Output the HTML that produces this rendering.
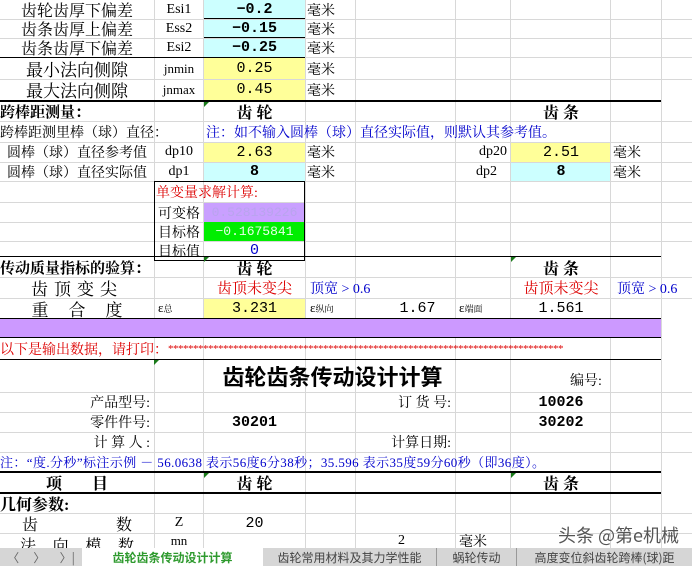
<!DOCTYPE html>
<html><head><meta charset="utf-8"><style>
*{margin:0;padding:0;box-sizing:border-box}
body{width:692px;height:566px;overflow:hidden;background:#fff;position:relative;font-family:"Liberation Serif","Noto Serif CJK SC",serif;font-size:14px;color:#000}
.v{position:absolute;top:0;width:1px;height:548px;background:#d8d8d8}
.h{position:absolute;left:0;width:692px;height:1px;background:#d8d8d8}
.k{position:absolute;background:#000}
.c{position:absolute;display:flex;align-items:center;justify-content:center;white-space:nowrap;overflow:hidden}
.l{justify-content:flex-start}
.r{justify-content:flex-end}
.b{font-weight:bold}
.m{font-family:"Liberation Mono","Noto Sans CJK SC",monospace;font-size:15px}
.cy{background:#ccffff}
.ye{background:#ffff99}
.blue{color:#0000cc}
.red{color:#dd0000}
.s{font-size:13px}
.tri{position:absolute;width:0;height:0;border-top:5px solid #1a7a1a;border-right:5px solid transparent}
</style></head><body>
<div class="c cy" style="left:204px;top:0;width:101px;height:57px"></div>
<div class="c ye" style="left:204px;top:57px;width:101px;height:43px"></div>
<div class="c ye" style="left:204px;top:142px;width:101px;height:20px"></div>
<div class="c cy" style="left:204px;top:162px;width:101px;height:19px"></div>
<div class="c ye" style="left:511px;top:142px;width:100px;height:20px"></div>
<div class="c cy" style="left:511px;top:162px;width:100px;height:19px"></div>
<div class="c ye" style="left:204px;top:298px;width:101px;height:20px"></div>
<div class="v" style="left:154px"></div><div class="v" style="left:203px"></div><div class="v" style="left:305px"></div><div class="v" style="left:355px"></div><div class="v" style="left:455px"></div><div class="v" style="left:510px"></div><div class="v" style="left:610px"></div><div class="v" style="left:661px"></div>
<div class="h" style="top:19px"></div><div class="h" style="top:38px"></div><div class="h" style="top:57px"></div><div class="h" style="top:79px"></div><div class="h" style="top:121px"></div><div class="h" style="top:142px"></div><div class="h" style="top:162px"></div><div class="h" style="top:181px"></div><div class="h" style="top:202px"></div><div class="h" style="top:222px"></div><div class="h" style="top:241px"></div><div class="h" style="top:277px"></div><div class="h" style="top:298px"></div><div class="h" style="top:392px"></div><div class="h" style="top:412px"></div><div class="h" style="top:432px"></div><div class="h" style="top:452px"></div><div class="h" style="top:513px"></div><div class="h" style="top:533px"></div>
<div class="k" style="left:204px;top:18px;width:101px;height:1px"></div>
<div class="k" style="left:204px;top:37px;width:101px;height:1px"></div>
<div class="k" style="left:0;top:57px;width:305px;height:1px"></div>
<div class="k" style="left:0;top:100px;width:661px;height:2px"></div>
<div style="position:absolute;left:204px;top:203px;width:101px;height:19px;background:#c9a0ff"></div>
<div style="position:absolute;left:204px;top:222px;width:101px;height:19px;background:#00ee00"></div>
<div class="k" style="left:154px;top:181px;width:151px;height:80px;background:transparent;border:1px solid #000"></div>
<div class="k" style="left:0;top:256px;width:661px;height:1px"></div>
<div class="k" style="left:0;top:318px;width:661px;height:1px"></div>
<div class="k" style="left:0;top:337px;width:661px;height:1px"></div>
<div class="k" style="left:0;top:359px;width:661px;height:1px"></div>
<div class="k" style="left:0;top:471px;width:661px;height:2px"></div>
<div class="k" style="left:0;top:492px;width:661px;height:2px"></div>
<div style="position:absolute;left:0;top:319px;width:661px;height:18px;background:#cc99ff"></div>
<div class="tri" style="left:204px;top:102px"></div><div class="tri" style="left:204px;top:257px"></div><div class="tri" style="left:511px;top:257px"></div><div class="tri" style="left:154px;top:360px"></div><div class="tri" style="left:204px;top:473px"></div><div class="tri" style="left:511px;top:473px"></div>
<div class="c" style="left:0;top:0;width:154px;height:19px;font-size:16px">齿轮齿厚下偏差</div>
<div class="c" style="left:154px;top:0;width:50px;height:19px">Esi1</div>
<div class="c b m" style="left:204px;top:0;width:101px;height:19px">−0.2</div>
<div class="c l" style="left:307px;top:0;width:48px;height:19px">毫米</div>
<div class="c" style="left:0;top:19px;width:154px;height:19px;font-size:16px">齿条齿厚上偏差</div>
<div class="c" style="left:154px;top:19px;width:50px;height:19px">Ess2</div>
<div class="c b m" style="left:204px;top:19px;width:101px;height:19px">−0.15</div>
<div class="c l" style="left:307px;top:19px;width:48px;height:19px">毫米</div>
<div class="c" style="left:0;top:38px;width:154px;height:19px;font-size:16px">齿条齿厚下偏差</div>
<div class="c" style="left:154px;top:38px;width:50px;height:19px">Esi2</div>
<div class="c b m" style="left:204px;top:38px;width:101px;height:19px">−0.25</div>
<div class="c l" style="left:307px;top:38px;width:48px;height:19px">毫米</div>
<div class="c" style="left:0;top:58px;width:154px;height:21px;font-size:17px">最小法向侧隙</div>
<div class="c s" style="left:154px;top:58px;width:50px;height:21px">jnmin</div>
<div class="c m" style="left:204px;top:58px;width:101px;height:21px">0.25</div>
<div class="c l" style="left:307px;top:58px;width:48px;height:21px">毫米</div>
<div class="c" style="left:0;top:79px;width:154px;height:21px;font-size:17px">最大法向侧隙</div>
<div class="c s" style="left:154px;top:79px;width:50px;height:21px">jnmax</div>
<div class="c m" style="left:204px;top:79px;width:101px;height:21px">0.45</div>
<div class="c l" style="left:307px;top:79px;width:48px;height:21px">毫米</div>
<div class="c l b" style="left:0;top:102px;width:154px;height:19px;font-size:15px">跨棒距测量：</div>
<div class="c b" style="left:204px;top:102px;width:101px;height:19px;font-size:16px">齿&nbsp;轮</div>
<div class="c b" style="left:511px;top:102px;width:100px;height:19px;font-size:16px">齿&nbsp;条</div>
<div class="c l" style="left:0;top:121px;width:203px;height:21px">跨棒距测里棒（球）直径：</div>
<div class="c l blue" style="left:206px;top:121px;width:400px;height:21px">注：如不输入圆棒（球）直径实际值，则默认其参考值。</div>
<div class="c" style="left:0;top:142px;width:154px;height:20px">圆棒（球）直径参考值</div>
<div class="c" style="left:154px;top:142px;width:50px;height:20px">dp10</div>
<div class="c m" style="left:204px;top:142px;width:101px;height:20px">2.63</div>
<div class="c l" style="left:307px;top:142px;width:48px;height:20px">毫米</div>
<div class="c r" style="left:455px;top:142px;width:52px;height:20px">dp20</div>
<div class="c m" style="left:511px;top:142px;width:100px;height:20px">2.51</div>
<div class="c l" style="left:613px;top:142px;width:48px;height:20px">毫米</div>
<div class="c" style="left:0;top:162px;width:154px;height:19px">圆棒（球）直径实际值</div>
<div class="c" style="left:154px;top:162px;width:50px;height:19px">dp1</div>
<div class="c b m" style="left:204px;top:162px;width:101px;height:19px">8</div>
<div class="c l" style="left:307px;top:162px;width:48px;height:19px">毫米</div>
<div class="c r" style="left:455px;top:162px;width:42px;height:19px">dp2</div>
<div class="c b m" style="left:511px;top:162px;width:100px;height:19px">8</div>
<div class="c l" style="left:613px;top:162px;width:48px;height:19px">毫米</div>
<div class="c l red" style="left:156px;top:182px;width:148px;height:20px">单变量求解计算:</div>
<div class="c" style="left:154px;top:203px;width:50px;height:19px">可变格</div>
<div class="c m" style="left:204px;top:203px;width:101px;height:19px;color:#b9a4ee;font-size:13px">0.528139226</div>
<div class="c" style="left:154px;top:222px;width:50px;height:19px">目标格</div>
<div class="c m" style="left:204px;top:222px;width:101px;height:19px;color:#e8ffe8;font-size:13px">−0.1675841</div>
<div class="c" style="left:154px;top:241px;width:50px;height:19px">目标值</div>
<div class="c m blue" style="left:204px;top:241px;width:101px;height:19px">0</div>
<div class="c l b" style="left:0;top:257px;width:203px;height:20px;font-size:15px">传动质量指标的验算：</div>
<div class="c b" style="left:204px;top:257px;width:101px;height:20px;font-size:16px">齿&nbsp;轮</div>
<div class="c b" style="left:511px;top:257px;width:100px;height:20px;font-size:16px">齿&nbsp;条</div>
<div class="c" style="left:0;top:277px;width:154px;height:21px;font-size:17px;letter-spacing:6px">齿顶变尖</div>
<div class="c red" style="left:204px;top:277px;width:101px;height:21px;font-size:15px">齿顶未变尖</div>
<div class="c l blue" style="left:310px;top:277px;width:100px;height:21px">顶宽 &gt; 0.6</div>
<div class="c red" style="left:511px;top:277px;width:100px;height:21px;font-size:15px">齿顶未变尖</div>
<div class="c l blue" style="left:617px;top:277px;width:75px;height:21px">顶宽 &gt; 0.6</div>
<div class="c" style="left:0;top:298px;width:154px;height:20px;font-size:17px;letter-spacing:20px;padding-left:20px">重合度</div>
<div class="c l s" style="left:158px;top:298px;width:45px;height:20px">ε<span style="font-size:9px">总</span></div>
<div class="c m" style="left:204px;top:298px;width:101px;height:20px">3.231</div>
<div class="c l s" style="left:310px;top:298px;width:45px;height:20px">ε<span style="font-size:9px">纵向</span></div>
<div class="c m" style="left:355px;top:298px;width:125px;height:20px">1.67</div>
<div class="c l s" style="left:459px;top:298px;width:50px;height:20px">ε<span style="font-size:9px">端面</span></div>
<div class="c m" style="left:511px;top:298px;width:100px;height:20px">1.561</div>
<div class="c l red" style="left:0;top:338px;width:692px;height:21px">以下是输出数据，请打印：<span style="font-size:11px;letter-spacing:-0.5px">*******************************************************************************</span></div>
<div class="c b" style="left:154px;top:360px;width:357px;height:32px;font-size:22px;font-family:'Noto Sans CJK SC',sans-serif">齿轮齿条传动设计计算</div>
<div class="c" style="left:511px;top:368px;width:100px;height:24px;padding-left:50px">编号:</div>
<div class="c r" style="left:0;top:392px;width:150px;height:20px">产品型号:</div>
<div class="c r" style="left:355px;top:392px;width:96px;height:20px">订 货 号:</div>
<div class="c b m" style="left:511px;top:392px;width:100px;height:20px">10026</div>
<div class="c r" style="left:0;top:412px;width:150px;height:20px">零件件号:</div>
<div class="c b m" style="left:204px;top:412px;width:101px;height:20px">30201</div>
<div class="c b m" style="left:511px;top:412px;width:100px;height:20px">30202</div>
<div class="c r" style="left:0;top:432px;width:150px;height:20px">计 算 人 :</div>
<div class="c r" style="left:355px;top:432px;width:96px;height:20px">计算日期:</div>
<div class="c l blue" style="left:0;top:452px;width:692px;height:19px;font-size:13px;letter-spacing:0.4px">注：“度.分秒”标注示例 － 56.0638 表示56度6分38秒；35.596 表示35度59分60秒（即36度）。</div>
<div class="c b" style="left:0;top:473px;width:154px;height:19px;font-size:16px;letter-spacing:30px;padding-left:30px">项目</div>
<div class="c b" style="left:204px;top:473px;width:101px;height:19px;font-size:16px">齿&nbsp;轮</div>
<div class="c b" style="left:511px;top:473px;width:100px;height:19px;font-size:16px">齿&nbsp;条</div>
<div class="c l b" style="left:0;top:494px;width:154px;height:19px;font-size:16px">几何参数:</div>
<div class="c" style="left:0;top:513px;width:154px;height:20px;font-size:16px;justify-content:space-between;padding:0 22px">齿<span>数</span></div>
<div class="c" style="left:154px;top:513px;width:50px;height:20px">Z</div>
<div class="c m" style="left:204px;top:513px;width:101px;height:20px">20</div>
<div class="c" style="left:0;top:533px;width:154px;height:15px;font-size:16px;justify-content:space-between;padding:0 20px;align-items:flex-start">法<span>向</span><span>模</span><span>数</span></div>
<div class="c s" style="left:154px;top:533px;width:50px;height:15px">mn</div>
<div class="c" style="left:355px;top:533px;width:100px;height:15px;justify-content:flex-end;padding-right:50px">2</div>
<div class="c l" style="left:459px;top:533px;width:50px;height:15px">毫米</div>
<div class="c" style="left:545px;top:522px;width:147px;height:26px;font-size:18px;color:#555;font-family:'Noto Sans CJK SC',sans-serif">头条 @第e机械</div>
<div style="position:absolute;left:0;top:548px;width:692px;height:18px;background:#d6d6d6;font-family:'Noto Sans CJK SC',sans-serif;font-size:12px;color:#444">
<div class="c" style="left:0;top:0;width:82px;height:18px;color:#666;justify-content:space-around">〈<span>〉</span><span>〉|</span></div>
<div class="c" style="left:82px;top:0;width:181px;height:18px;background:#fff;color:#2e9a2e;font-weight:bold">齿轮齿条传动设计计算</div>
<div class="c" style="left:263px;top:0;width:174px;height:18px;border-right:1px solid #999">齿轮常用材料及其力学性能</div>
<div class="c" style="left:437px;top:0;width:80px;height:18px;border-right:1px solid #999">蜗轮传动</div>
<div class="c" style="left:517px;top:0;width:175px;height:18px">高度变位斜齿轮跨棒(球)距</div>
</div>
</body></html>
